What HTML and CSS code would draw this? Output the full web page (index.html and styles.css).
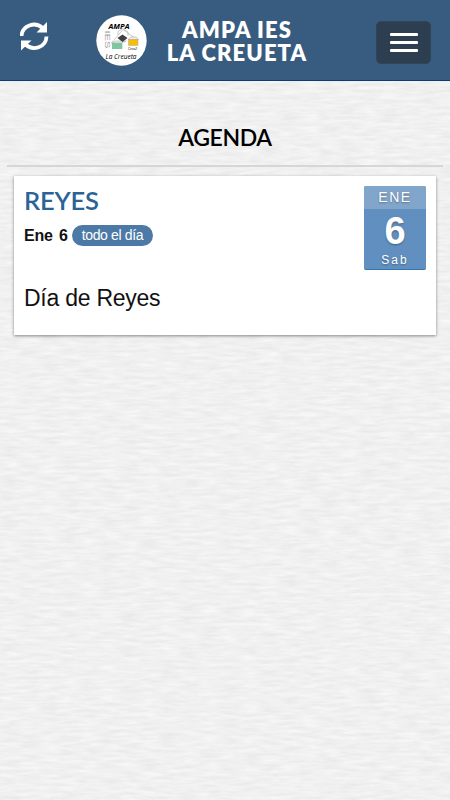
FILE: index.html
```
<!DOCTYPE html>
<html lang="es">
<head>
<meta charset="UTF-8">
<meta name="viewport" content="width=device-width, initial-scale=1">
<title>AMPA IES La Creueta</title>
<link rel="stylesheet" href="styles.css">
</head>
<body>
<header class="cabecera">
	<a class="recargar" href="#" aria-label="Recargar">
		<svg width="30" height="30" viewBox="0 0 30 30">
			<path d="M1.500 14C2 3.500 15 -1 22.500 6" fill="none" stroke="#fff" stroke-width="3.800"/>
			<path d="M27 0V10.500H16.500Z" fill="#fff"/>
			<path d="M26.500 14.500C26 25.500 13 29.500 5.500 22.500" fill="none" stroke="#fff" stroke-width="3.800"/>
			<path d="M1 28.500V18.500H11.500Z" fill="#fff"/>
		</svg>
	</a>
	<svg class="logo" width="51" height="51" viewBox="0 0 51 51">
		<circle cx="25.500" cy="25.500" r="25.200" fill="#fff"/>
		<path d="M15.500 28L27 14.500 41.500 25M22 20V16.500L26.500 13.500 32 17V21M26 34V20" fill="none" stroke="#bbb" stroke-width=".8"/>
		<path d="M15.500 28L20 26H30L26 28ZM32 24.500L35 22H40L42.500 24.500Z" fill="#eee" stroke="#aaa" stroke-width=".6"/>
		<rect x="16" y="28" width="10" height="6" fill="#7ac7a0"/>
		<rect x="32.500" y="24.500" width="9.500" height="6" fill="#fabe00" stroke="#aaa" stroke-width=".5"/>
		<path d="M21.500 23L26.500 19.500 31.500 23 26.500 27Z" fill="#423f40"/>
		<text class="logo-ampa" x="12.500" y="13.500" textLength="21" lengthAdjust="spacingAndGlyphs">AMPA</text>
		<text class="logo-ies" transform="translate(9 15.500) rotate(90)" textLength="18" lengthAdjust="spacingAndGlyphs">IES</text>
		<text class="logo-coral" x="32" y="34.500" textLength="9" lengthAdjust="spacingAndGlyphs">Ceva2</text>
		<text class="logo-nombre" x="9.500" y="43.800" textLength="31" lengthAdjust="spacingAndGlyphs">La Creueta</text>
	</svg>
	<h1 class="titulo"><span class="linea">AMPA IES</span><span class="linea">LA CREUETA</span></h1>
	<button class="menu" type="button" aria-label="Menú">
		<span class="raya"></span>
		<span class="raya"></span>
		<span class="raya"></span>
	</button>
</header>
<main class="contenido">
	<h2 class="seccion">AGENDA</h2>
	<article class="evento">
		<div class="datos">
			<h3 class="nombre">REYES</h3>
			<p class="cuando"><b>Ene&nbsp;6</b><span class="etiqueta">todo el día</span></p>
			<p class="texto">Día de Reyes</p>
		</div>
		<div class="fecha">
			<span class="mes">ENE</span>
			<span class="dia">6</span>
			<span class="semana">Sab</span>
		</div>
	</article>
</main>
</body>
</html>
```

FILE: styles.css
```
* {
	box-sizing: border-box;
}
body {
	margin: 0;
	min-height: 800px;
	font-family: "Liberation Sans", Arial, sans-serif;
	color: #111;
	/* papel con vetas horizontales */
	background: #f0f0f0 url("data:image/svg+xml,%3Csvg xmlns='http://www.w3.org/2000/svg' width='450' height='800'%3E%3Cfilter id='p' x='0' y='0' width='100%25' height='100%25' color-interpolation-filters='sRGB'%3E%3CfeTurbulence type='fractalNoise' baseFrequency='.05 .3' numOctaves='3' seed='4'/%3E%3CfeColorMatrix values='.08 0 0 0 .902 .08 0 0 0 .902 .08 0 0 0 .902 0 0 0 0 1'/%3E%3C/filter%3E%3Crect width='450' height='800' filter='url(%23p)'/%3E%3C/svg%3E");
}
.cabecera {
	display: flex;
	align-items: flex-start;
	height: 81px;
	padding: 15px 19px 0 20px;
	background: #385c80;
	border-bottom: 1px solid #044077;
}
.recargar {
	width: 30px;
	height: 30px;
	margin-top: 7px;
}
.recargar svg {
	display: block;
}
.logo {
	margin-left: 46px;
}
.logo-ampa {
	font: italic bold 7.5px "Open Sans", sans-serif;
}
.logo-ies {
	font: 8px "Liberation Sans", sans-serif;
	fill: #999;
}
.logo-coral {
	font: italic 4px "Liberation Sans", sans-serif;
}
.logo-nombre {
	font: italic 8px "Open Sans", sans-serif;
}
.titulo {
	width: 142px;
	margin: 3px 0 0 19px;
	font: 800 22px/23px Lato, sans-serif;
	letter-spacing: 1.1px;
	text-align: center;
	white-space: nowrap;
	color: #fff;
}
.linea {
	display: block;
}
.menu {
	display: flex;
	flex-direction: column;
	align-items: center;
	justify-content: center;
	gap: 5px;
	width: 55px;
	height: 43px;
	margin: 6px 0 0 auto;
	padding: 0;
	background: #2c3e50;
	border: 1px solid #304559;
	border-radius: 5px;
}
.raya {
	width: 28px;
	height: 3px;
	border-radius: 1px;
	background: #fff;
}
.contenido {
	padding: 39px 7px 0;
}
.seccion {
	height: 47px;
	margin: 0 0 9px;
	border-bottom: 2px solid #d6d6d6;
	font: 600 23px/34px Lato, sans-serif;
	letter-spacing: -.4px;
	text-align: center;
	color: #000;
}
.evento {
	display: flex;
	justify-content: space-between;
	height: 159px;
	margin: 0 7px;
	padding: 10px;
	background: #fff;
	box-shadow: 0 1px 3px rgba(0, 0, 0, .45);
}
.nombre {
	margin: 0;
	font: 600 25.5px/29px Lato, sans-serif;
	letter-spacing: -.2px;
	color: #2a6496;
}
.cuando {
	display: flex;
	align-items: center;
	height: 21px;
	margin: 10px 0 0;
	font-size: 16px;
	letter-spacing: -.2px;
	word-spacing: 2px;
}
.etiqueta {
	margin-left: 4px;
	padding: 0 10px;
	border-radius: 11px;
	background: #4c79a6;
	font-size: 14px;
	line-height: 21px;
	letter-spacing: -.35px;
	word-spacing: 0;
	color: #fff;
}
.texto {
	margin: 39px 0 0;
	font-size: 23px;
	line-height: 26px;
	letter-spacing: -.25px;
}
.fecha {
	display: flex;
	flex-direction: column;
	width: 62px;
	height: 84px;
	border-radius: 2px;
	border-bottom: 1px solid #3276b1;
	background: #6190c0;
	overflow: hidden;
	text-align: center;
	color: #fff;
	text-shadow: 0 1px 2px rgba(0, 0, 0, .35);
}
.mes {
	height: 23px;
	background: #82a6cb;
	font-size: 14px;
	line-height: 23px;
	letter-spacing: 1.5px;
}
.dia {
	height: 42px;
	font-size: 38px;
	font-weight: bold;
	line-height: 44px;
}
.semana {
	font-size: 12px;
	line-height: 19px;
	letter-spacing: 2px;
}
```
